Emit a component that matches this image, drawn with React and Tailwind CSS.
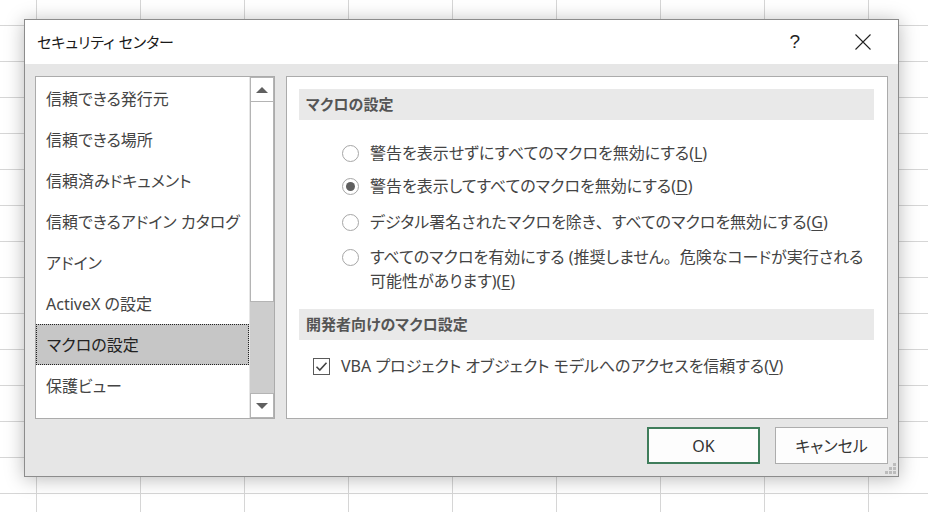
import React from 'react';

const navItems = [
  '信頼できる発行元',
  '信頼できる場所',
  '信頼済みドキュメント',
  '信頼できるアドイン カタログ',
  'アドイン',
  'ActiveX の設定',
  'マクロの設定',
  '保護ビュー',
];

// full-width punctuation keeps its natural width, like the original dialog
const P = ({ children }) => <span className="[font-feature-settings:normal]">{children}</span>;

const macroOptions = [
  { label: <>警告を表示せずにすべてのマクロを無効にする</>, key: 'L', mt: 'mt-[21px]' },
  { label: <>警告を表示してすべてのマクロを無効にする</>, key: 'D', mt: 'mt-[9px]', checked: true },
  { label: <>デジタル署名されたマクロを除き<P>、</P>すべてのマクロを無効にする</>, key: 'G', mt: 'mt-[12px]' },
  {
    label: <>すべてのマクロを有効にする (推奨しません<P>。</P>危険なコードが実行される</>,
    line2: '可能性があります)',
    key: 'E',
    mt: 'mt-[11px]',
  },
];

const SheetGrid = () => {
  const cells = [];
  for (let r = 0; r < 15; r++) {
    for (let c = 0; c < 10; c++) {
      cells.push(<div key={`${r}-${c}`} className="border-r border-b border-[#d6d6d6]" />);
    }
  }
  return (
    <div className="grid grid-cols-[37px_repeat(9,104px)] grid-rows-[26px_repeat(14,36px)] w-full h-full">
      {cells}
    </div>
  );
};

const Radio = ({ checked }) => (
  <span className="w-[17px] h-[17px] rounded-full border border-[#a6a6a6] bg-white flex items-center justify-center shrink-0">
    {checked && <span className="w-[9px] h-[9px] rounded-full bg-[#5f5f5f]" />}
  </span>
);

const SectionHeader = ({ children, className = '' }) => (
  <div className={`h-[31px] bg-[#e9e9e9] flex items-center pl-[7px] text-[15px] font-bold text-[#555] ${className}`}>
    {children}
  </div>
);

const App = () => {
  return (
    <div className="relative w-[928px] h-[512px] overflow-hidden bg-white font-['Noto_Sans','Noto_Sans_CJK_JP',sans-serif] [font-feature-settings:'palt']">
      <SheetGrid />

      {/* dialog window */}
      <div className="absolute left-[24px] top-[19px] w-[875px] h-[458px] border border-[#8c8c8c] bg-[#e6e6e6] shadow-[0_2px_18px_rgba(0,0,0,0.28)] flex flex-col">
        <div className="h-[44px] bg-white flex items-center pl-[12px] shrink-0">
          <span className="text-[15px] text-[#1a1a1a]">セキュリティ センター</span>
          <span className="ml-auto text-[19px] text-[#222] mr-[55px] font-['Liberation_Sans',sans-serif]">?</span>
          <svg width="16" height="16" viewBox="0 0 16 16" className="mr-[27px]">
            <path d="M0.5 0.5 L15.5 15.5 M15.5 0.5 L0.5 15.5" stroke="#222" strokeWidth="1.1" fill="none" />
          </svg>
        </div>

        <div className="flex-1 flex flex-col pt-[12px] px-[10px] pb-[12px]">
          <div className="flex gap-[11px] h-[343px]">
            {/* category list */}
            <div className="w-[240px] border border-[#ababab] bg-white flex">
              <div className="flex-1 flex flex-col pt-[1px]">
                {navItems.map((item) => {
                  const selected = item === 'マクロの設定';
                  return (
                    <div
                      key={item}
                      className={`h-[41px] flex items-center pl-[10px] text-[16px] whitespace-nowrap ${
                        selected ? 'bg-[#c6c6c6] border border-dotted border-[#222] text-[#222] pl-[9px]' : 'text-[#444]'
                      }`}
                    >
                      {item}
                    </div>
                  );
                })}
              </div>
              <div className="w-[25px] flex flex-col bg-[#cdcdcd] border-l border-[#e6e6e6]">
                <div className="h-[25px] bg-white border border-[#b4b4b4] flex items-center justify-center">
                  <span className="w-0 h-0 border-l-[6px] border-r-[6px] border-b-[6px] border-l-transparent border-r-transparent border-b-[#606060]" />
                </div>
                <div className="h-[200px] bg-white border-x border-b border-[#b4b4b4]" />
                <div className="flex-1" />
                <div className="h-[25px] bg-white border border-[#b4b4b4] flex items-center justify-center">
                  <span className="w-0 h-0 border-l-[6px] border-r-[6px] border-t-[6px] border-l-transparent border-r-transparent border-t-[#606060]" />
                </div>
              </div>
            </div>

            {/* settings panel */}
            <div className="flex-1 border border-[#ababab] bg-white pt-[12px] pl-[12px] pr-[13px]">
              <SectionHeader>マクロの設定</SectionHeader>
              <div className="flex flex-col pl-[43px]">
                {macroOptions.map((opt) => (
                  <div key={opt.key} className={`flex items-start gap-[11px] ${opt.mt}`}>
                    <span className="h-[24px] flex items-center">
                      <Radio checked={opt.checked} />
                    </span>
                    <span className="text-[16px] leading-[24px] text-[#444] whitespace-nowrap">
                      {opt.line2 ? (
                        <>
                          {opt.label}
                          <br />
                          {opt.line2}(<span className="underline underline-offset-2">{opt.key}</span>)
                        </>
                      ) : (
                        <>
                          {opt.label}(<span className="underline underline-offset-2">{opt.key}</span>)
                        </>
                      )}
                    </span>
                  </div>
                ))}
              </div>

              <SectionHeader className="mt-[16px]">開発者向けのマクロ設定</SectionHeader>
              <div className="flex items-center gap-[11px] pl-[14px] mt-[14px] h-[24px]">
                <span className="w-[17px] h-[17px] border border-[#5a5a5a] bg-white flex items-center justify-center">
                  <svg width="13" height="13" viewBox="0 0 13 13">
                    <path d="M1.5 6.8 L4.8 10 L11.5 2.8" stroke="#444" strokeWidth="1.6" fill="none" />
                  </svg>
                </span>
                <span className="text-[16px] leading-[24px] text-[#444] whitespace-nowrap">
                  VBA プロジェクト オブジェクト モデルへのアクセスを信頼する(<span className="underline underline-offset-2">V</span>)
                </span>
              </div>
            </div>
          </div>

          <div className="flex justify-end gap-[15px] mt-[8px]">
            <button className="w-[113px] h-[37px] border-2 border-[#3f7d5b] bg-[#fdfdfd] text-[16px] text-[#333]">
              OK
            </button>
            <button className="w-[113px] h-[37px] border border-[#adadad] bg-[#fdfdfd] text-[16px] text-[#333]">
              キャンセル
            </button>
          </div>
        </div>

        {/* resize grip */}
        <svg width="12" height="12" viewBox="0 0 12 12" className="absolute right-[1px] bottom-[1px]">
          <rect x="8" y="0" width="3" height="3" fill="#bcbcbc" />
          <rect x="4" y="4" width="3" height="3" fill="#bcbcbc" />
          <rect x="8" y="4" width="3" height="3" fill="#bcbcbc" />
          <rect x="0" y="8" width="3" height="3" fill="#bcbcbc" />
          <rect x="4" y="8" width="3" height="3" fill="#bcbcbc" />
          <rect x="8" y="8" width="3" height="3" fill="#bcbcbc" />
        </svg>
      </div>
    </div>
  );
};

export default App;
